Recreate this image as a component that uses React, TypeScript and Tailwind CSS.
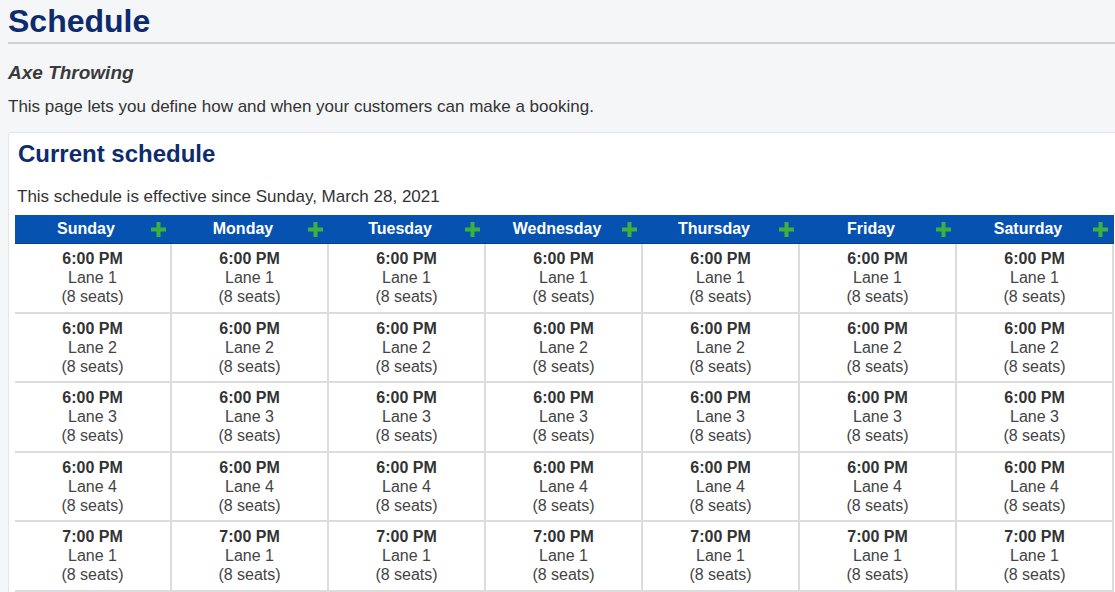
const days = ["Sunday", "Monday", "Tuesday", "Wednesday", "Thursday", "Friday", "Saturday"];
const slots = [
  { time: "6:00 PM", lane: 1 },
  { time: "6:00 PM", lane: 2 },
  { time: "6:00 PM", lane: 3 },
  { time: "6:00 PM", lane: 4 },
  { time: "7:00 PM", lane: 1 },
  { time: "7:00 PM", lane: 2 },
];

function Plus() {
  return (
    <svg width="15" height="15" viewBox="0 0 15 15" className="shrink-0">
      <rect x="5.5" y="0" width="4" height="15" fill="#3db13d" />
      <rect x="0" y="5.5" width="15" height="4" fill="#3db13d" />
    </svg>
  );
}

export default function App() {
  return (
    <div className="w-[1115px] h-[592px] overflow-hidden bg-[#f5f6f8] text-[#333] font-[Liberation_Sans,Arial,sans-serif]">
      <div className="pl-[8px]">
        <h1 className="text-[32px] font-bold leading-[42px] text-[#0d2b6e] border-b-2 border-[#d0d2d6]">Schedule</h1>
        <h2 className="mt-[17px] text-[19px] font-bold italic text-[#3a3a3a] leading-[24px]">Axe Throwing</h2>
        <p className="mt-[11px] text-[17px] leading-[22px] text-[#333]">
          This page lets you define how and when your customers can make a booking.
        </p>
        <div className="mt-[14px] w-[1200px] bg-white border border-[#e3e5e8] rounded-[3px] pl-[6px] pt-[6px]">
          <h3 className="text-[24px] font-bold leading-[30px] text-[#0d2b6e] pl-[3px]">Current schedule</h3>
          <p className="mt-[17px] text-[17px] leading-[22px] pl-[2px]">This schedule is effective since Sunday, March 28, 2021</p>
          <div className="grid grid-cols-[repeat(7,157px)] mt-[7px]">
            {days.map((d) => (
              <div key={d} className="h-[29px] bg-[#0652b0] flex items-center pr-[6px] border-b border-[#0a3f88]">
                <span className="flex-1 text-center text-white font-bold text-[16px] pl-[6px]">{d}</span>
                <Plus />
              </div>
            ))}
            {slots.map((s, i) =>
              days.map((d) => (
                <div
                  key={d + i}
                  className="h-[69.5px] border-r-2 border-b-2 border-[#dcdcdc] first:border-l flex flex-col items-center pt-[5px] text-[16px] leading-[19px]"
                >
                  <span className="font-bold text-[#333]">{s.time}</span>
                  <span className="text-[#444]">Lane {s.lane}</span>
                  <span className="text-[#444]">(8 seats)</span>
                </div>
              ))
            )}
          </div>
        </div>
      </div>
    </div>
  );
}
